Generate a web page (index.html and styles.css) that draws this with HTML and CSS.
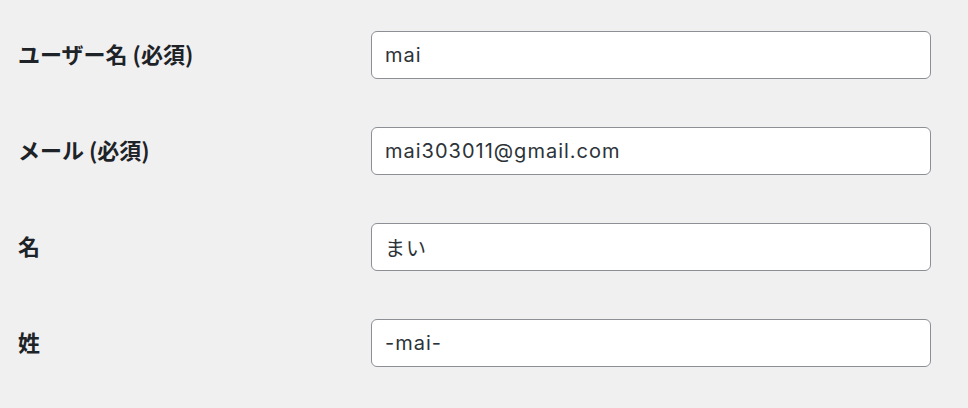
FILE: index.html
```html
<!DOCTYPE html>
<html lang="ja">
<head>
<meta charset="utf-8">
<link rel="stylesheet" href="styles.css">
</head>
<body>
<div class="form">
  <div class="row">
    <label class="label" for="u">ユーザー名 <span class="req">(必須)</span></label>
    <input class="field" id="u" type="text" value="mai">
  </div>
  <div class="row">
    <label class="label" for="e">メール <span class="req">(必須)</span></label>
    <input class="field" id="e" type="text" value="mai303011@gmail.com">
  </div>
  <div class="row">
    <label class="label" for="f">名</label>
    <input class="field" id="f" type="text" value="まい">
  </div>
  <div class="row">
    <label class="label" for="l">姓</label>
    <input class="field" id="l" type="text" value="-mai-">
  </div>
</div>
</body>
</html>
```
FILE: styles.css
```css
html, body {
  margin: 0;
  padding: 0;
  background: #f0f0f1;
}
body {
  font-family: "Noto Sans CJK JP", sans-serif;
  color: #1d2327;
}
.form {
  display: flex;
  flex-direction: column;
  gap: 48px;
  padding: 31px 37px 0 18px;
}
.row {
  display: flex;
  align-items: center;
  height: 48px;
}
.label {
  width: 353px;
  flex: none;
  padding-bottom: 3px;
  font-family: "Noto Sans CJK JP", sans-serif;
  font-weight: 700;
  font-size: 22px;
  line-height: 1.4;
  color: #1d2327;
}
.field {
  box-sizing: border-box;
  width: 560px;
  height: 48px;
  margin: 0;
  padding: 0 13px;
  border: 1px solid #8c8f94;
  border-radius: 6px;
  background: #fff;
  font-family: Inter, "Noto Sans CJK JP", sans-serif;
  font-size: 20px;
  letter-spacing: 1px;
  color: #2c3338;
  outline: none;
}
```
